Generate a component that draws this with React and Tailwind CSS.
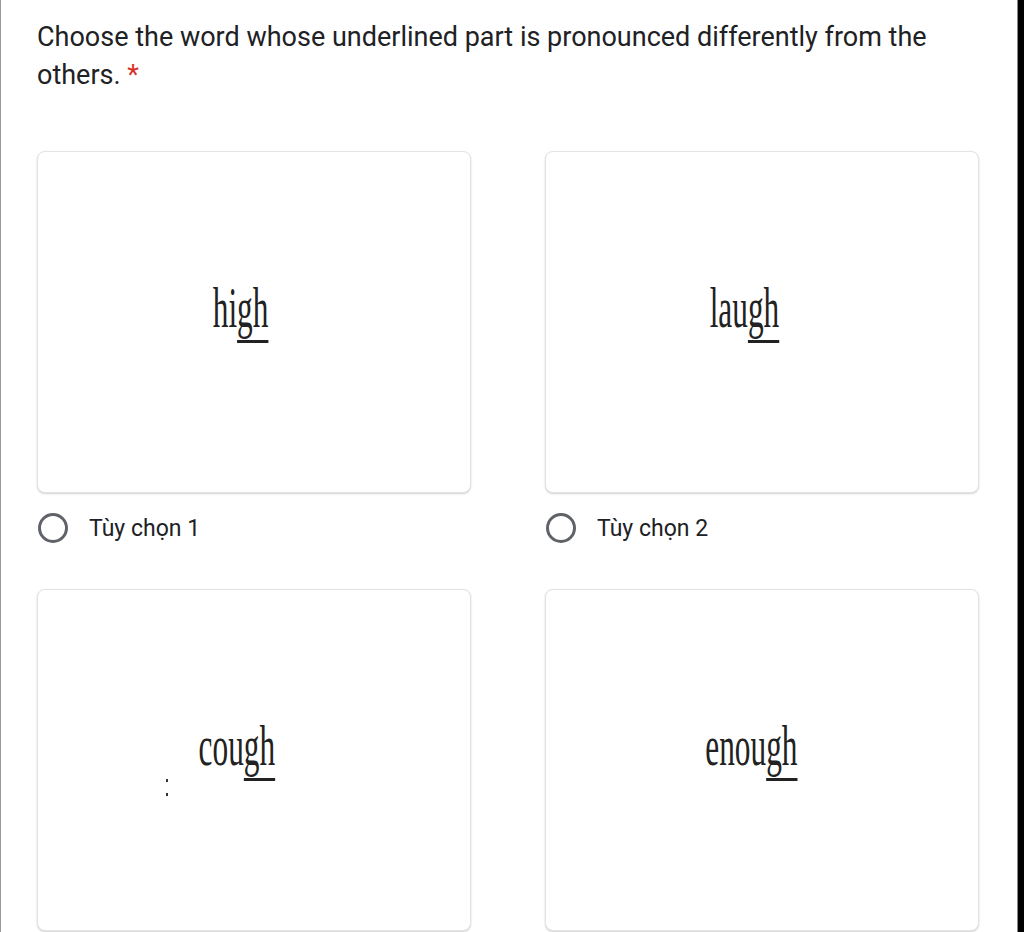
import React from "react";

function Word({ pre, under, shift }) {
  return (
    <div className={`flex h-full w-full items-center justify-center pb-[28px] ${shift}`}>
      <span
        className="inline-block origin-center scale-x-[0.54] text-[58px] leading-none text-[#222]"
        style={{ fontFamily: '"Liberation Serif", "Times New Roman", serif' }}
      >
        {pre}
        <span className="underline decoration-[2.5px] underline-offset-[13px] [text-decoration-skip-ink:none]">
          {under}
        </span>
      </span>
    </div>
  );
}

function Card({ children }) {
  return (
    <div className="relative h-[342px] rounded-[8px] border border-[#e3e3e3] bg-white shadow-[0_1px_2px_rgba(0,0,0,0.18)]">
      {children}
    </div>
  );
}

function Radio({ label }) {
  return (
    <div className="mt-[20px] mb-[46px] flex h-[30px] items-center">
      <div className="ml-[1px] h-[30px] w-[30px] rounded-full border-[3px] border-[#5f6368]" />
      <span className="ml-[21px] mt-[3px] text-[23px] text-[#202124]">{label}</span>
    </div>
  );
}

export default function App() {
  return (
    <div
      className="flex h-[932px] w-[1024px] overflow-hidden bg-white"
      style={{ fontFamily: 'Roboto, "Noto Sans", Arial, sans-serif' }}
    >
      <div className="w-[1px] bg-[#9a9a9a]" />
      <div className="flex-1 pl-[36px] pt-[18px]">
        <div className="text-[27px] leading-[38px] text-[#202124]">
          Choose the word whose underlined part is pronounced differently from the
          <br />
          others. <span className="text-[#d93025]">*</span>
        </div>
        <div className="mt-[57px] grid w-[942px] grid-cols-[434px_434px] gap-x-[74px]">
          <div>
            <Card>
              <Word pre="hi" under="gh" shift="pr-[26px]" />
            </Card>
            <Radio label="Tùy chọn 1" />
          </div>
          <div>
            <Card>
              <Word pre="lau" under="gh" shift="pr-[36px]" />
            </Card>
            <Radio label="Tùy chọn 2" />
          </div>
          <div>
            <Card>
              <Word pre="cou" under="gh" shift="pr-[34px]" />
              <div className="absolute left-[128px] top-[189px] flex flex-col gap-[11px]">
                <div className="h-[3px] w-[2px] bg-[#333]" />
                <div className="h-[3px] w-[2px] bg-[#333]" />
              </div>
            </Card>
          </div>
          <div>
            <Card>
              <Word pre="enou" under="gh" shift="pr-[22px]" />
            </Card>
          </div>
        </div>
      </div>
      <div className="w-[1px] bg-[#8a8a8a]" />
      <div className="w-[6px] bg-black" />
    </div>
  );
}
